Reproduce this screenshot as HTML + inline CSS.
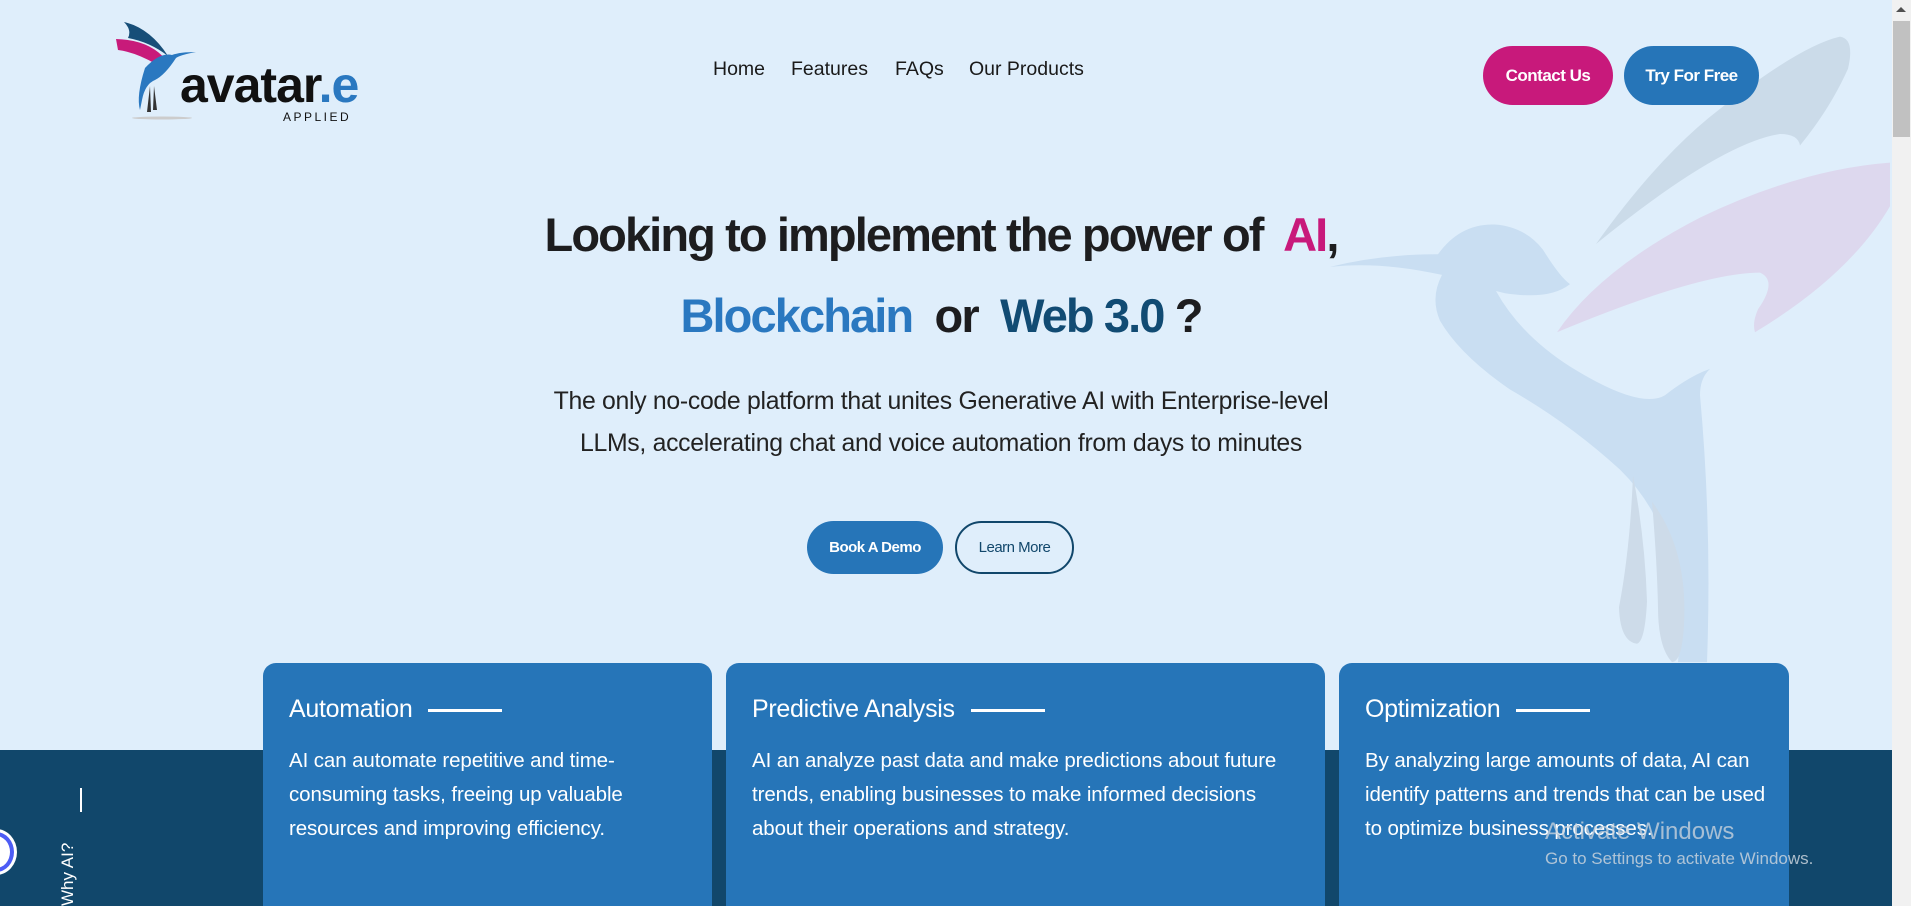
<!DOCTYPE html>
<html><head><meta charset="utf-8"><style>
*{margin:0;padding:0;box-sizing:border-box}
html,body{width:1911px;height:906px;overflow:hidden}
body{background:#dfeefb;font-family:"Liberation Sans",sans-serif;position:relative;color:#1d1d1f}
.abs{position:absolute}
.nav a{position:absolute;top:58px;font-size:19.5px;color:#1a1a1a;text-decoration:none}
.btn{position:absolute;border-radius:30px;color:#fff;font-size:17px;font-weight:bold;display:flex;align-items:center;justify-content:center;letter-spacing:-0.5px}
h1{position:absolute;left:0;width:1882px;text-align:center;font-size:47px;font-weight:bold;letter-spacing:-1.9px}
.p{position:absolute;left:0;width:1882px;text-align:center;font-size:24.8px;color:#222;letter-spacing:-0.3px}
.card{position:absolute;top:663px;height:260px;background:#2675b8;border-radius:13px;color:#fff}
.card h3{position:absolute;left:26px;top:32px;font-size:25px;font-weight:normal;letter-spacing:-0.3px}
.card h3 span{display:inline-block;width:74px;height:3px;background:#fff;vertical-align:middle;margin-left:16px}
.card p{position:absolute;left:26px;top:81px;font-size:20.5px;line-height:34px;letter-spacing:-0.1px}
</style></head><body>
<svg class="abs" style="left:0;top:0" width="1911" height="906">
<g transform="scale(1,1.1455)">
<path fill="#c9def2" d="M1330 233 Q1380 222 1438 222 Q1460 195 1495 196 Q1525 198 1543 218 Q1560 242 1570 248 Q1550 262 1505 256 L1496 254 Q1520 292 1570 320 Q1640 358 1665 345 Q1690 328 1710 322 Q1700 330 1700 345 Q1712 460 1707 578 L1678 578 Q1690 470 1620 410 Q1570 370 1510 340 Q1460 310 1440 280 Q1430 260 1442 240 Q1380 228 1330 233Z"/>
<path d="M1596 213 Q1660 135 1720 95 Q1800 40 1840 32 Q1855 34 1848 60 Q1830 95 1800 127 Q1798 117 1780 117 Q1720 125 1596 213Z" fill="#cbdbe9"/>
<path d="M1557 290 Q1600 235 1700 190 Q1800 148 1890 142 L1890 180 Q1850 240 1755 290 Q1752 282 1758 270 Q1778 245 1760 238 Q1700 238 1557 290Z" fill="#ddd8ee"/>
<path d="M1633 415 Q1645 470 1647 525 Q1645 560 1637 562 Q1620 560 1619 530 Q1630 480 1633 415Z M1652 438 Q1688 480 1684 545 Q1682 578 1672 578 Q1658 565 1658 530 Q1657 490 1652 438Z" fill="#cddbe9"/>
</g>
<rect x="0" y="750" width="1892" height="156" fill="#11476b"/>
<rect x="1892" y="0" width="19" height="906" fill="#f1f1f1"/>
<rect x="1893" y="21" width="17" height="116" fill="#c1c1c1"/>
<path d="M1896 12 L1901 7 L1906 12Z" fill="#505050"/>
<path d="M124 22 Q150 28 168 56 Q150 42 128 38 Q132 30 124 22Z" fill="#174e78"/>
<path d="M116 39 Q150 40 166 60 L156 64 Q135 52 118 50Z" fill="#c81a7a"/>
<path d="M145 68 Q160 52 172 55 Q180 52 196 52 Q180 55 176 58 Q165 75 155 80 Q145 84 142 100 L140 110 Q136 96 145 68Z" fill="#2a78c0"/>
<path d="M150 86 L151 112 L147 112Z M154 86 L157 110 L153 110Z" fill="#333"/>
<ellipse cx="162" cy="118" rx="30" ry="1.5" fill="#ccc"/>
</svg>
<div class="abs" style="left:180px;top:60px;font-size:50px;font-weight:bold;color:#111;letter-spacing:-1px;line-height:1">avatar<span style="color:#2a78c0">.e</span></div>
<div class="abs" style="left:283px;top:110px;font-size:12px;letter-spacing:2.5px;color:#111">APPLIED</div>
<div class="nav"><a style="left:713px">Home</a><a style="left:791px">Features</a><a style="left:895px">FAQs</a><a style="left:969px">Our Products</a></div>
<div class="btn" style="left:1483px;top:46px;width:130px;height:59px;background:#c8197b">Contact Us</div>
<div class="btn" style="left:1624px;top:46px;width:135px;height:59px;background:#2675b8">Try For Free</div>
<h1 style="top:207px">Looking to implement the power of&nbsp; <span style="color:#c8197b">AI</span>,</h1>
<h1 style="top:288px"><span style="color:#2a78c0">Blockchain</span>&nbsp; or&nbsp; <span style="color:#114b73">Web 3.0</span> ?</h1>
<div class="p" style="top:388px">The only no-code platform that unites Generative AI with Enterprise-level</div>
<div class="p" style="top:430px">LLMs, accelerating chat and voice automation from days to minutes</div>
<div class="btn" style="left:807px;top:521px;width:136px;height:53px;background:#2675b8;font-size:15px">Book A Demo</div>
<div class="btn" style="left:955px;top:521px;width:119px;height:53px;border:2px solid #11476b;color:#11476b;font-size:15px;font-weight:normal">Learn More</div>
<div class="card" style="left:263px;width:449px"><h3>Automation<span></span></h3><p>AI can automate repetitive and time-<br>consuming tasks, freeing up valuable<br>resources and improving efficiency.</p></div>
<div class="card" style="left:726px;width:599px"><h3>Predictive Analysis<span></span></h3><p>AI an analyze past data and make predictions about future<br>trends, enabling businesses to make informed decisions<br>about their operations and strategy.</p></div>
<div class="card" style="left:1339px;width:450px"><h3>Optimization<span></span></h3><p>By analyzing large amounts of data, AI can<br>identify patterns and trends that can be used<br>to optimize business processes.</p></div>
<div class="abs" style="left:80px;top:788px;width:2px;height:24px;background:#fff"></div>
<div class="abs" style="left:58px;top:906px;transform:rotate(-90deg);transform-origin:0 0;color:#fff;font-size:17px;white-space:nowrap">Why AI?</div>
<div class="abs" style="left:-22px;top:832px;width:36px;height:40px;border-radius:50%;border:4px solid #4d5cf5;background:#fff;box-shadow:0 0 0 3px #fff"></div>
<div class="abs" style="left:1545px;top:818px;font-size:24px;color:rgba(200,210,220,0.8)">Activate Windows</div>
<div class="abs" style="left:1545px;top:849px;font-size:17px;color:rgba(200,210,220,0.85)">Go to Settings to activate Windows.</div>
</body></html>
